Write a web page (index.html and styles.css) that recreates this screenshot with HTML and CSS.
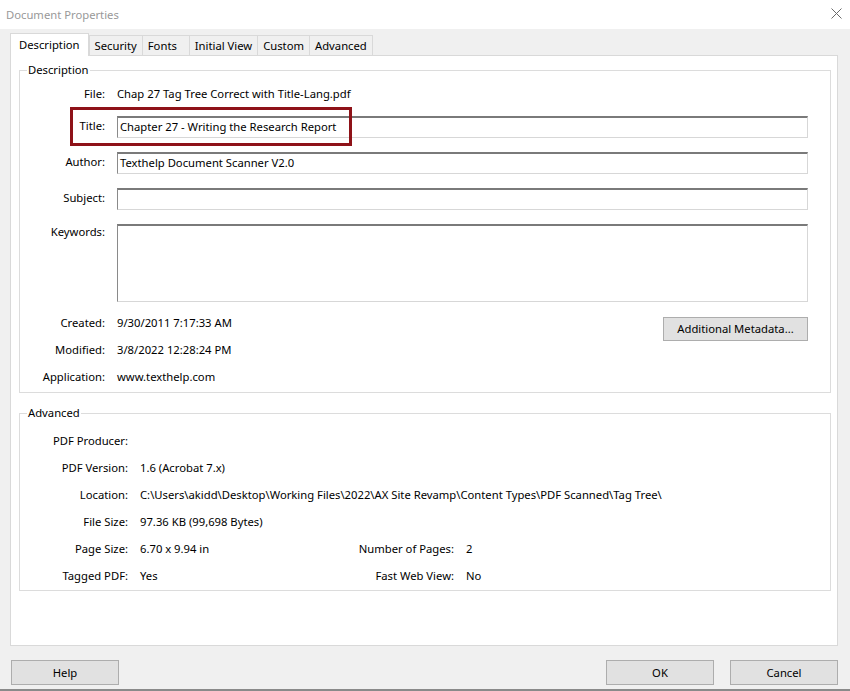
FILE: index.html
```html
<!DOCTYPE html>
<html lang="en">
<head>
  <meta charset="UTF-8">
  <meta name="viewport" content="width=device-width, initial-scale=1.0">
  <title>Document Properties</title>
  <link rel="stylesheet" href="styles.css">
</head>
<body>
  <div class="window">
    <div class="titlebar">
      <span class="caption">Document Properties</span>
      <svg class="close" width="11" height="11" viewBox="0 0 11 11">
        <path d="M0.5 0.5 L10.5 10.5 M10.5 0.5 L0.5 10.5" stroke="#6a6a6a" stroke-width="1" fill="none"/>
      </svg>
    </div>

    <div class="tabs">
      <div class="tab active">Description</div>
      <div class="tab">Security</div>
      <div class="tab">Fonts</div>
      <div class="tab">Initial View</div>
      <div class="tab">Custom</div>
      <div class="tab">Advanced</div>
    </div>

    <div class="panel">
      <fieldset class="group group-desc">
        <legend>Description</legend>
        <div class="fields">
          <span class="label">File:</span>
          <span class="value">Chap 27 Tag Tree Correct with Title-Lang.pdf</span>

          <span class="label boxed">Title:</span>
          <div class="input">Chapter 27 - Writing the Research Report</div>

          <span class="label boxed">Author:</span>
          <div class="input">Texthelp Document Scanner V2.0</div>

          <span class="label boxed">Subject:</span>
          <div class="input"></div>

          <span class="label">Keywords:</span>
          <div class="input textarea"></div>

          <div class="highlight"></div>
        </div>

        <div class="dates">
          <span class="label">Created:</span>
          <span class="value">9/30/2011 7:17:33 AM</span>
          <button class="btn meta">Additional Metadata...</button>

          <span class="label">Modified:</span>
          <span class="value">3/8/2022 12:28:24 PM</span>

          <span class="label">Application:</span>
          <span class="value">www.texthelp.com</span>
        </div>
      </fieldset>

      <fieldset class="group group-adv">
        <legend>Advanced</legend>
        <div class="adv">
          <span class="label">PDF Producer:</span>
          <span class="value wide"></span>

          <span class="label">PDF Version:</span>
          <span class="value wide">1.6 (Acrobat 7.x)</span>

          <span class="label">Location:</span>
          <span class="value wide">C:\Users\akidd\Desktop\Working Files\2022\AX Site Revamp\Content Types\PDF Scanned\Tag Tree\</span>

          <span class="label">File Size:</span>
          <span class="value wide">97.36 KB (99,698 Bytes)</span>

          <span class="label">Page Size:</span>
          <span class="value">6.70 x 9.94 in</span>
          <span class="label">Number of Pages:</span>
          <span class="value">2</span>

          <span class="label">Tagged PDF:</span>
          <span class="value">Yes</span>
          <span class="label">Fast Web View:</span>
          <span class="value">No</span>
        </div>
      </fieldset>
    </div>

    <div class="actions">
      <button class="btn">Help</button>
      <span class="spacer"></span>
      <button class="btn">OK</button>
      <button class="btn">Cancel</button>
    </div>
    <div class="edge"></div>
  </div>
</body>
</html>
```

FILE: styles.css
```css
* {
  box-sizing: border-box;
}

body {
  margin: 0;
  font-family: 'Noto Sans', 'Open Sans', sans-serif;
  font-size: 11.25px;
  line-height: 16px;
  color: #000;
  background: #f0f0f0;
}

.window {
  display: flex;
  flex-direction: column;
  height: 691px;
}

.titlebar {
  height: 29px;
  background: #fff;
  display: flex;
  align-items: center;
  justify-content: space-between;
  padding: 0 8px 0 6px;
}

.caption {
  color: #999;
}

.close {
  display: block;
  margin-top: -2px;
}

.tabs {
  display: flex;
  align-items: flex-end;
  padding: 4px 0 0 10px;
}

.tab {
  height: 20px;
  min-width: 48px;
  padding: 0 5px;
  border: 1px solid #d9d9d9;
  border-bottom: none;
  margin-left: -1px;
  line-height: 19px;
  background: #f0f0f0;
}

.tab.active {
  position: relative;
  z-index: 1;
  height: 23px;
  margin-left: 0;
  margin-bottom: -1px;
  margin-right: 1px;
  padding: 0 8px;
  line-height: 21px;
  background: #fff;
}

.panel {
  flex: 1;
  margin: 0 12px 0 10px;
  padding: 6px 6px 0 8px;
  background: #fff;
  border: 1px solid #d9d9d9;
}

.group {
  margin: 0;
  padding: 0 22px 7px 0;
  border: 1px solid #dcdcdc;
  min-width: 0;
}

.group legend {
  margin-left: 7px;
  padding: 0 1px;
}

.group-adv {
  margin-top: 12px;
  padding-bottom: 6px;
}

.label {
  text-align: right;
  white-space: nowrap;
}

.label.boxed {
  padding-top: 2px;
}

.value {
  white-space: nowrap;
}

.fields {
  position: relative;
  display: grid;
  grid-template-columns: 85px 1fr;
  column-gap: 12px;
  row-gap: 14px;
  margin-top: 8px;
}

.input {
  height: 22px;
  padding: 1px 2px;
  border: 1px solid;
  border-top-width: 2px;
  border-color: #7a7a7a #d7d7d7 #d7d7d7 #8a8a8a;
  background: #fff;
  white-space: nowrap;
}

.input.textarea {
  height: 78px;
}

.highlight {
  position: absolute;
  left: 50px;
  top: 21px;
  width: 282px;
  height: 39px;
  border: 3px solid #8e1218;
  pointer-events: none;
}

.dates {
  display: grid;
  grid-template-columns: 85px 1fr auto;
  grid-auto-rows: 16px;
  column-gap: 12px;
  row-gap: 11px;
  margin-top: 13px;
}

.btn {
  font: inherit;
  color: #000;
  height: 25px;
  width: 108px;
  padding: 0;
  background: #e1e1e1;
  border: 1px solid #adadad;
}

.btn.meta {
  grid-column: 3;
  grid-row: 1 / span 2;
  align-self: start;
  width: 145px;
  height: 24px;
  margin-top: 2px;
}

.adv {
  display: grid;
  grid-template-columns: 108px 180px 122px 1fr;
  grid-auto-rows: 16px;
  column-gap: 12px;
  row-gap: 11px;
  margin-top: 12px;
}

.adv .wide {
  grid-column: 2 / -1;
}

.actions {
  display: flex;
  gap: 16px;
  padding: 14px 12px 4px 11px;
}

.spacer {
  flex: 1;
}

.edge {
  height: 2px;
  background: #8a8a8a;
}
```
